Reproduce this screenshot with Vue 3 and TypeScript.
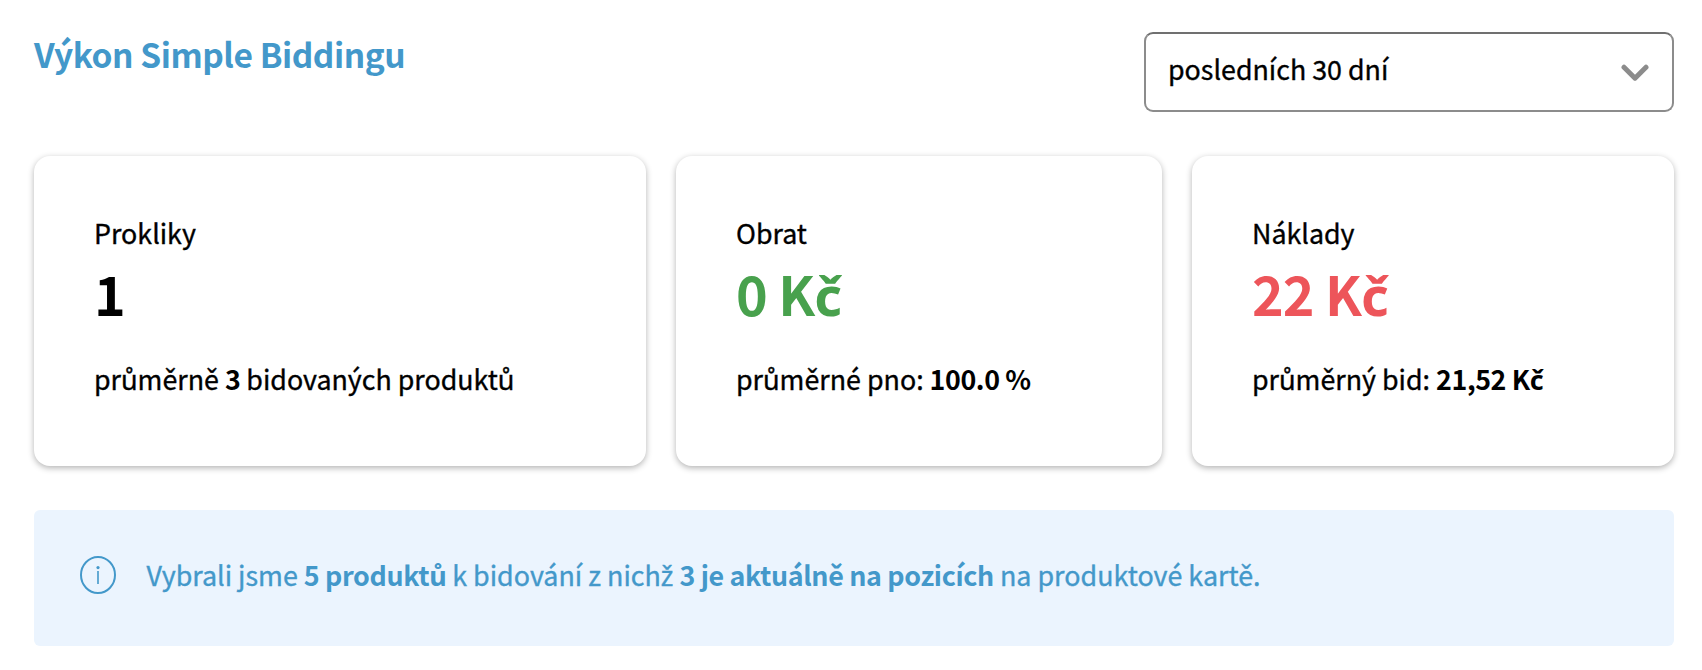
<script setup lang="ts">
interface Run { text: string; bold?: boolean }
interface Stat { label: string; value: string; tone: string; note: Run[] }

const stats: Stat[] = [
  { label: 'Prokliky', value: '1', tone: 'plain', note: [{ text: 'průměrně ' }, { text: '3', bold: true }, { text: ' bidovaných produktů' }] },
  { label: 'Obrat', value: '0 Kč', tone: 'positive', note: [{ text: 'průměrné pno: ' }, { text: '100.0 %', bold: true }] },
  { label: 'Náklady', value: '22 Kč', tone: 'negative', note: [{ text: 'průměrný bid: ' }, { text: '21,52 Kč', bold: true }] },
]
const message: Run[] = [
  { text: 'Vybrali jsme ' },
  { text: '5 produktů', bold: true },
  { text: ' k bidování z nichž ' },
  { text: '3 je aktuálně na pozicích', bold: true },
  { text: ' na produktové kartě.' },
]

// č and ž have no glyph of their own in the main family, so they get a second one
const pieces = (text: string): string[] => text.split(/([čž])/).filter(Boolean)
const isCaron = (piece: string): boolean => piece === 'č' || piece === 'ž'
</script>

<template>
  <main class="panel">
    <header class="head">
      <h1 class="title">Výkon Simple Biddingu</h1>
      <button class="select" type="button">
        <span class="select-text">posledních 30 dní</span>
        <svg class="chevron" viewBox="0 0 28 18"><path d="M3 3.2 L14 14.2 L25 3.2" /></svg>
      </button>
    </header>
    <section class="cards">
      <article v-for="s in stats" :key="s.label" class="card">
        <div class="label">{{ s.label }}</div>
        <div class="value" :class="s.tone"><span v-for="(p, i) in pieces(s.value)" :key="i" :class="{ caron: isCaron(p) }">{{ p }}</span></div>
        <div class="note"><span v-for="(r, j) in s.note" :key="j" :class="{ bold: r.bold }"><span v-for="(p, i) in pieces(r.text)" :key="i" :class="{ caron: isCaron(p) }">{{ p }}</span></span></div>
      </article>
    </section>
    <aside class="info">
      <svg class="icon" viewBox="0 0 36 38"><ellipse cx="18" cy="19" rx="17" ry="18" /><path class="stem" d="M18 15V28" /><circle class="dot" cx="18" cy="11.6" r="1.6" /></svg>
      <p class="msg"><span v-for="(r, j) in message" :key="j" :class="{ bold: r.bold }"><span v-for="(p, i) in pieces(r.text)" :key="i" :class="{ caron: isCaron(p) }">{{ p }}</span></span></p>
    </aside>
  </main>
</template>

<style>
body { background: #fff; }
</style>
<style scoped>
.panel { box-sizing: border-box; width: 1702px; height: 670px; padding: 32px 28px 0 34px; font-family: "Noto Sans CJK SC", "Noto Sans", sans-serif; font-size: 26.82px; color: #000; -webkit-text-stroke: 0.35px currentColor; }
.head { display: flex; justify-content: space-between; height: 124px; }
.title { margin: 2px 0 0; font-size: 33.5px; line-height: 40px; font-weight: 700; letter-spacing: -0.45px; color: #4398ca; -webkit-text-stroke: 0; }
.select { box-sizing: border-box; width: 530px; height: 80px; display: flex; justify-content: space-between; align-items: center; padding: 0 23px 0 22px; background: #fff; border: 2px solid #8c8c8c; border-top-color: #707070; border-radius: 9px; font: inherit; color: #000; }
.select-text { margin-bottom: 8px; }
.chevron { width: 28px; height: 18px; margin-top: 2px; fill: none; stroke: #8c8c8c; stroke-width: 5; stroke-linecap: round; stroke-linejoin: round; }
.cards { display: grid; grid-template-columns: 612px 486px 482px; gap: 30px; }
.card { box-sizing: border-box; height: 310px; padding: 59px 60px; border-radius: 16px; box-shadow: 0 2px 6px rgba(0, 0, 0, 0.3); line-height: 36px; white-space: pre; }
.value { font-size: 53.8px; line-height: 64px; font-weight: 700; letter-spacing: -0.9px; margin: 10px 0 36px; -webkit-text-stroke: 0; }
.positive { color: #48a14d; }
.negative { color: #ed555a; }
.bold { font-weight: 700; letter-spacing: -0.4px; -webkit-text-stroke: 0; }
.caron { font-family: "Noto Sans", sans-serif; line-height: 1; }
.info { box-sizing: border-box; height: 136px; margin-top: 44px; display: flex; align-items: center; padding-left: 46px; gap: 30.5px; background: #ebf4fe; border-radius: 6px; color: #4398ca; }
.icon { width: 36px; height: 38px; margin-bottom: 6px; fill: none; stroke: #4398ca; stroke-width: 2; }
.stem { stroke-width: 1.6; }
.dot { fill: #4398ca; stroke: none; }
.msg { margin: 0 0 6px; font-size: 26.86px; line-height: 36px; white-space: pre; }
.msg .bold { letter-spacing: -0.35px; }
</style>
